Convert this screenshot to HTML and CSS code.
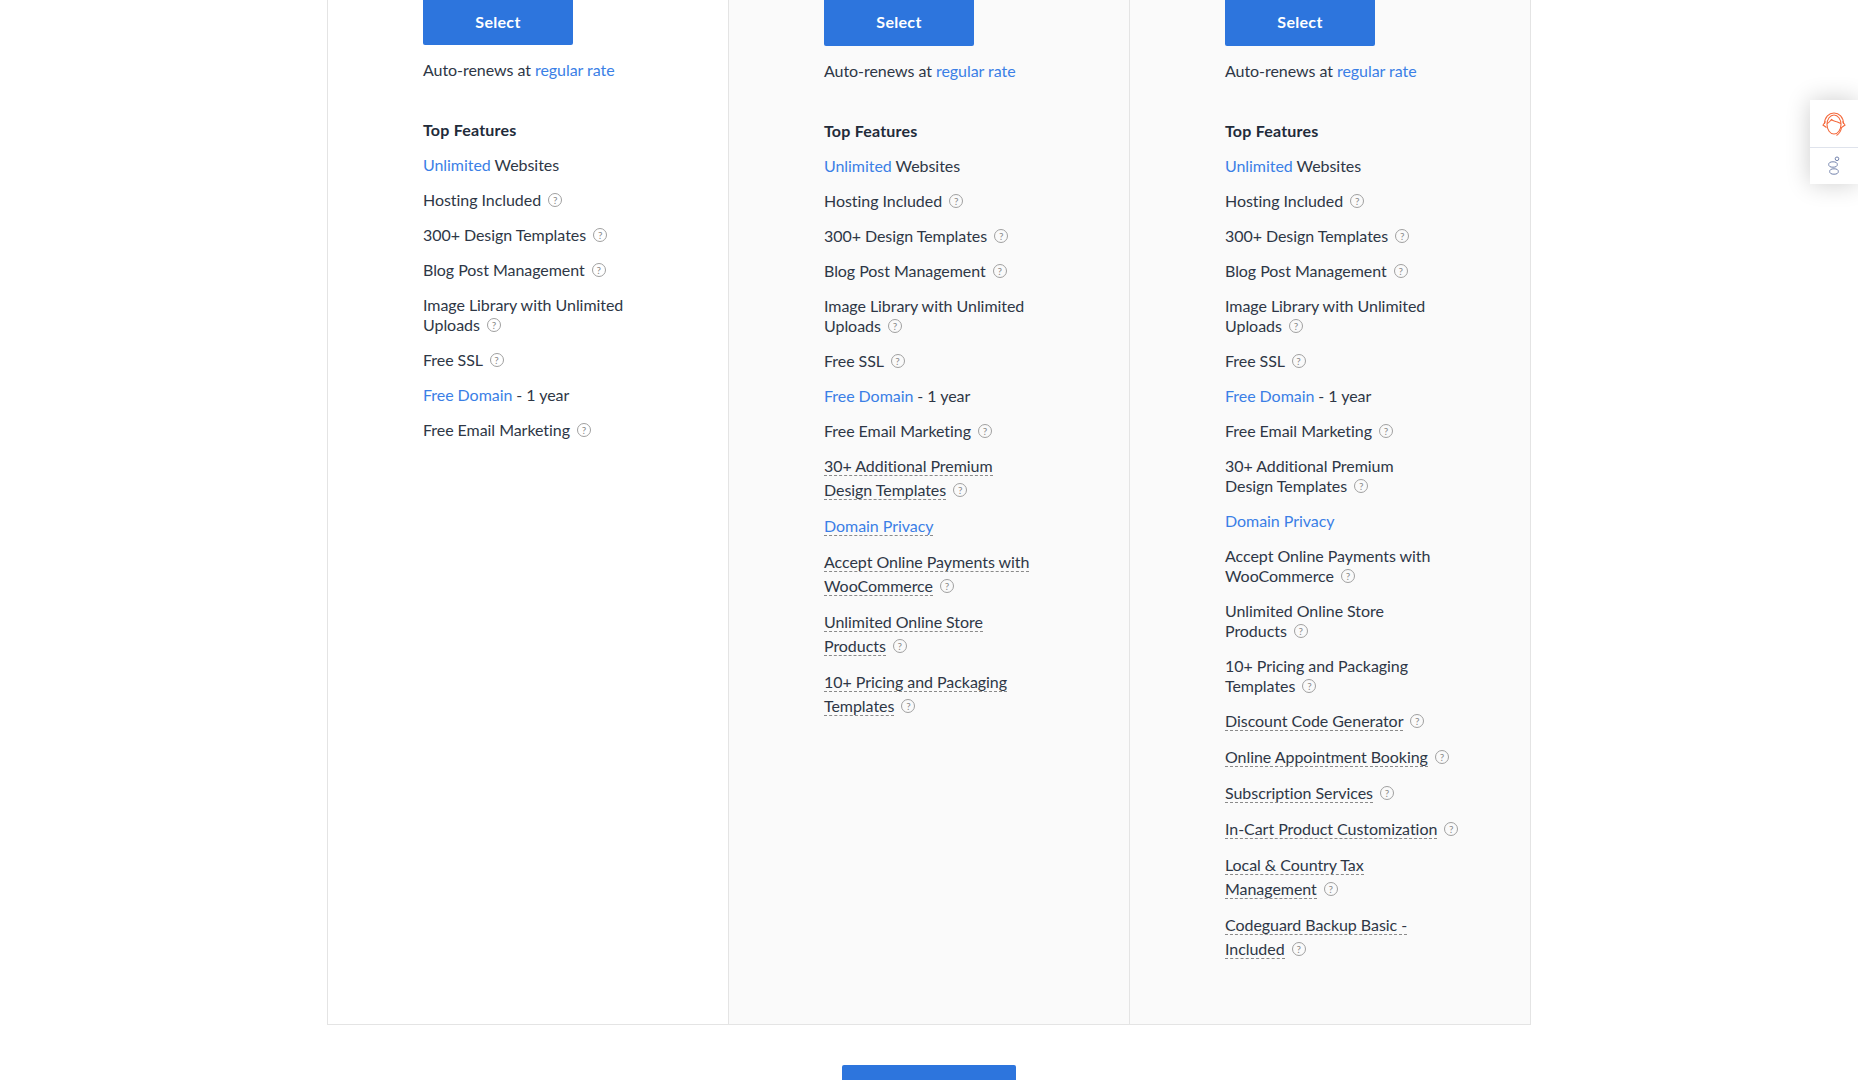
FILE: index.html
```html
<!DOCTYPE html>
<html lang="en">
<head>
<meta charset="utf-8">
<title>Plans</title>
<link rel="stylesheet" href="styles.css">
</head>
<body>
<main class="page">
  <section class="plans">
    <article class="plan plan-first">
      <a class="select">Select</a>
      <p class="renew">Auto-renews at <a class="link">regular rate</a></p>
      <h3 class="title">Top Features</h3>
      <ul class="features">
        <li><a class="link">Unlimited</a> Websites</li>
        <li>Hosting Included <i class="hint">?</i></li>
        <li>300+ Design Templates <i class="hint">?</i></li>
        <li>Blog Post Management <i class="hint">?</i></li>
        <li>Image Library with Unlimited<br>Uploads <i class="hint">?</i></li>
        <li>Free SSL <i class="hint">?</i></li>
        <li><a class="link">Free Domain</a> - 1 year</li>
        <li>Free Email Marketing <i class="hint">?</i></li>
      </ul>
    </article>
    <article class="plan plan-shaded">
      <a class="select">Select</a>
      <p class="renew">Auto-renews at <a class="link">regular rate</a></p>
      <h3 class="title">Top Features</h3>
      <ul class="features">
        <li><a class="link">Unlimited</a> Websites</li>
        <li>Hosting Included <i class="hint">?</i></li>
        <li>300+ Design Templates <i class="hint">?</i></li>
        <li>Blog Post Management <i class="hint">?</i></li>
        <li>Image Library with Unlimited<br>Uploads <i class="hint">?</i></li>
        <li>Free SSL <i class="hint">?</i></li>
        <li><a class="link">Free Domain</a> - 1 year</li>
        <li>Free Email Marketing <i class="hint">?</i></li>
        <li class="extra"><span class="dash">30+ Additional Premium<br>Design Templates</span> <i class="hint">?</i></li>
        <li class="extra"><span class="dash link">Domain Privacy</span></li>
        <li class="extra"><span class="dash">Accept Online Payments with<br>WooCommerce</span> <i class="hint">?</i></li>
        <li class="extra"><span class="dash">Unlimited Online Store<br>Products</span> <i class="hint">?</i></li>
        <li class="extra"><span class="dash">10+ Pricing and Packaging<br>Templates</span> <i class="hint">?</i></li>
      </ul>
    </article>
    <article class="plan plan-shaded">
      <a class="select">Select</a>
      <p class="renew">Auto-renews at <a class="link">regular rate</a></p>
      <h3 class="title">Top Features</h3>
      <ul class="features">
        <li><a class="link">Unlimited</a> Websites</li>
        <li>Hosting Included <i class="hint">?</i></li>
        <li>300+ Design Templates <i class="hint">?</i></li>
        <li>Blog Post Management <i class="hint">?</i></li>
        <li>Image Library with Unlimited<br>Uploads <i class="hint">?</i></li>
        <li>Free SSL <i class="hint">?</i></li>
        <li><a class="link">Free Domain</a> - 1 year</li>
        <li>Free Email Marketing <i class="hint">?</i></li>
        <li>30+ Additional Premium<br>Design Templates <i class="hint">?</i></li>
        <li><a class="link">Domain Privacy</a></li>
        <li>Accept Online Payments with<br>WooCommerce <i class="hint">?</i></li>
        <li>Unlimited Online Store<br>Products <i class="hint">?</i></li>
        <li>10+ Pricing and Packaging<br>Templates <i class="hint">?</i></li>
        <li class="extra"><span class="dash">Discount Code Generator</span> <i class="hint">?</i></li>
        <li class="extra"><span class="dash">Online Appointment Booking</span> <i class="hint">?</i></li>
        <li class="extra"><span class="dash">Subscription Services</span> <i class="hint">?</i></li>
        <li class="extra"><span class="dash">In-Cart Product Customization</span> <i class="hint">?</i></li>
        <li class="extra"><span class="dash">Local &amp; Country Tax<br>Management</span> <i class="hint">?</i></li>
        <li class="extra"><span class="dash">Codeguard Backup Basic -<br>Included</span> <i class="hint">?</i></li>
      </ul>
    </article>
  </section>
  <div class="more"><a class="more-button"></a></div>
</main>
<aside class="side">
  <div class="side-cell">
    <svg class="side-icon" width="26" height="26" viewBox="0 0 26 26" fill="none" stroke="#f4693c" stroke-width="1.1">
      <ellipse cx="13" cy="13.5" rx="7" ry="9.5"/>
      <path d="M6 12.5 C8 12 9.5 9.5 10.5 8.5 C12 10 13.5 10 15 10.5 C17 11 18.500 12 20 12.500"/>
      <path d="M3.500 13 C3.500 6 8 2 13 2 C18 2 22.500 6 22.500 13"/>
      <path d="M4.500 10.500 L2 14 L5.500 16.500"/>
      <path d="M21.500 10.500 L24 14 L20.500 16.500 C20 20 18 23 15.500 24.500"/>
    </svg>
  </div>
  <div class="side-cell">
    <svg class="side-icon" width="14" height="20" viewBox="0 0 14 20" fill="none" stroke="#7383ad" stroke-width="1">
      <circle cx="10" cy="2.800" r="1.800"/>
      <ellipse cx="6" cy="8.500" rx="4.300" ry="2.700"/>
      <ellipse cx="7" cy="15.500" rx="4.300" ry="2.700"/>
    </svg>
  </div>
</aside>
</body>
</html>
```

FILE: styles.css
```css
* { box-sizing: border-box; }
html, body { margin: 0; padding: 0; height: 1080px; overflow: hidden; background: #fff; }
body { font-family: "Lato", "Liberation Sans", sans-serif; font-size: 16px; letter-spacing: -0.05px; color: #2e3746; }
.page { width: 1204px; margin: 0 auto; }
.plans { display: grid; grid-template-columns: 400px 401px 401px; height: 1025px; border: 1px solid #e4e4e4; border-top: 0; }
.plan { padding-left: 95px; border-left: 1px solid #e4e4e4; }
.plan:first-child { border-left: 0; }
.plan-shaded { background: #fafafa; }
.select { display: flex; align-items: center; justify-content: center; width: 150px; height: 46px; padding-bottom: 3px; background: #2d75dd; color: #fff; font-weight: 700; font-size: 16px; letter-spacing: 0.3px; border-radius: 0 0 2px 2px; }
.plan-first .select { height: 45px; }
.renew { margin: 15px 0 0; line-height: 20px; }
.link { color: #3b7fe6; }
.title { margin: 40px 0 0; font-size: 16px; line-height: 20px; font-weight: 700; letter-spacing: 0.2px; color: #222b3a; }
.features { list-style: none; margin: 15px 0 0; padding: 0; }
.features li { line-height: 20px; margin-bottom: 15px; }
.features li.extra { line-height: 24px; margin-bottom: 12px; }
.features li:not(.extra) + li.extra { margin-top: -2px; }
.dash { border-bottom: 1px dashed #8a8a8a; }
.hint { display: inline-block; width: 14px; height: 14px; margin: 3px 0 0 3px; border: 1px solid #a0a0a0; border-radius: 50%; color: #8a8a8a; font-style: normal; font-size: 10px; line-height: 12px; letter-spacing: 0; text-align: center; vertical-align: top; }
.extra .hint { margin-top: 5px; }
.more { display: flex; justify-content: center; padding-top: 40px; }
.more-button { display: block; width: 174px; height: 48px; background: #2d75dd; border-radius: 2px 2px 0 0; }
.side { position: fixed; top: 100px; right: 0; width: 48px; height: 84px; background: #fff; box-shadow: 0 0 24px rgba(0,0,0,.2); }
.side-cell { display: flex; align-items: center; justify-content: center; height: 47px; }
.side-cell + .side-cell { height: 37px; border-top: 1px solid #dfe3ec; }
```
